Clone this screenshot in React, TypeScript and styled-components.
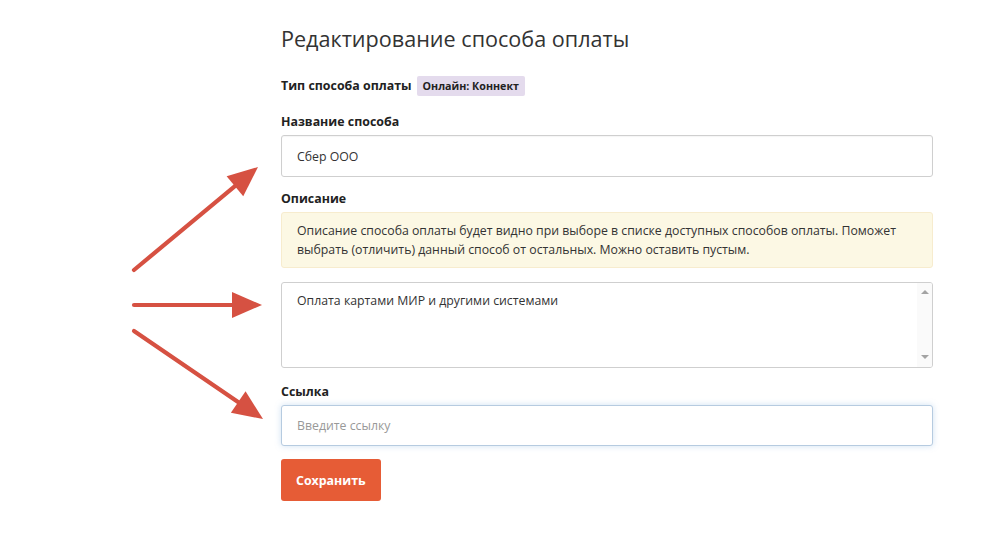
import React from "react";
import styled, { createGlobalStyle } from "styled-components";

const Global = createGlobalStyle`
  html, body { margin: 0; padding: 0; background: #fff; }
  body { font-family: "Open Sans", "Noto Sans", sans-serif; color: #333; }
  * { box-sizing: border-box; }
`;

const Page = styled.div`
  position: relative;
  width: 983px;
  min-height: 545px;
  padding: 26px 50px 0 281px;
`;

const Title = styled.h1`
  margin: 0 0 24px;
  font-size: 21.6px;
  font-weight: 400;
  line-height: 26px;
  color: #333;
`;

const TypeRow = styled.div`
  display: flex;
  align-items: center;
  gap: 5px;
  margin-bottom: 16px;
`;

const Label = styled.div`
  font-size: 12.4px;
  font-weight: 700;
  line-height: 18px;
  color: #222;
  padding-top: 1px;
  margin-bottom: 4px;
`;

const InlineLabel = styled(Label)`
  padding-top: 0;
  margin-bottom: 0;
`;

const Badge = styled.span`
  display: inline-block;
  background: #e4dbed;
  color: #222;
  font-size: 10.7px;
  font-weight: 700;
  line-height: 20px;
  padding: 0 6px;
  border-radius: 2px;
`;

const Group = styled.div`
  margin-bottom: 12px;
`;

const Input = styled.input<{ $focus?: boolean }>`
  display: block;
  width: 100%;
  height: ${(p) => (p.$focus ? 41 : 42)}px;
  padding: 0 15px;
  font-family: inherit;
  font-size: 12.3px;
  color: #333;
  background: #fff;
  border: 1px solid ${(p) => (p.$focus ? "#b6cbe0" : "#cfcfcf")};
  border-radius: 3px;
  outline: none;
  box-shadow: ${(p) =>
    p.$focus ? "0 0 6px rgba(120, 170, 220, 0.35)" : "inset 0 1px 1px rgba(0,0,0,0.04)"};
  &::placeholder { color: #999; }
`;

const Alert = styled.div`
  background: #fcf8e4;
  border: 1px solid #f7ecce;
  border-radius: 3px;
  padding: 8px 15px 8px;
  font-size: 12.3px;
  line-height: 19px;
  color: #333;
  margin-bottom: 14px;
`;

const AreaBox = styled.div`
  display: flex;
  height: 86px;
  border: 1px solid #cfcfcf;
  border-radius: 3px;
  overflow: hidden;
  margin-bottom: 14px;
  background: #fff;
`;

const TextArea = styled.textarea`
  flex: 1;
  display: block;
  height: 100%;
  padding: 8px 15px;
  font-family: inherit;
  font-size: 12.3px;
  line-height: 19px;
  color: #333;
  border: none;
  resize: none;
  overflow: hidden;
  outline: none;
  background: transparent;
`;

const ScrollTrack = styled.div`
  width: 15px;
  background: #fafafa;
  display: flex;
  flex-direction: column;
  align-items: center;
  justify-content: space-between;
  padding: 7px 0 8px;
`;

const ScrollArrow = styled.span<{ $dir: "up" | "down" }>`
  width: 0;
  height: 0;
  border-left: 4px solid transparent;
  border-right: 4px solid transparent;
  ${(p) =>
    p.$dir === "up"
      ? "border-bottom: 4px solid #a3a3a3;"
      : "border-top: 4px solid #a3a3a3;"}
`;

const Button = styled.button`
  margin-top: 1px;
  height: 42px;
  padding: 0 15px;
  background: #e65c36;
  color: #fff;
  border: none;
  border-radius: 3px;
  font-family: inherit;
  font-size: 12.4px;
  font-weight: 700;
  cursor: pointer;
`;

const Arrows = styled.svg`
  position: absolute;
  left: 0;
  top: 0;
  pointer-events: none;
`;

const RED = "#d65142";

const Arrow = ({ x1, y1, x2, y2 }: { x1: number; y1: number; x2: number; y2: number }) => {
  const ang = Math.atan2(y2 - y1, x2 - x1);
  const len = 30;
  const half = 13;
  const bx = x2 - len * Math.cos(ang);
  const by = y2 - len * Math.sin(ang);
  const px = -Math.sin(ang) * half;
  const py = Math.cos(ang) * half;
  const lx = x2 - (len - 2) * Math.cos(ang);
  const ly = y2 - (len - 2) * Math.sin(ang);
  return (
    <g>
      <line x1={x1} y1={y1} x2={lx} y2={ly} stroke={RED} strokeWidth={4.2} strokeLinecap="round" />
      <polygon points={`${x2},${y2} ${bx + px},${by + py} ${bx - px},${by - py}`} fill={RED} />
    </g>
  );
};

export default function App() {
  return (
    <>
      <Global />
      <Page>
        <Title>Редактирование способа оплаты</Title>
        <TypeRow>
          <InlineLabel>Тип способа оплаты</InlineLabel>
          <Badge>Онлайн: Коннект</Badge>
        </TypeRow>
        <Group>
          <Label>Название способа</Label>
          <Input defaultValue="Сбер ООО" />
        </Group>
        <Label>Описание</Label>
        <Alert>
          Описание способа оплаты будет видно при выборе в списке доступных способов оплаты. Поможет
          выбрать (отличить) данный способ от остальных. Можно оставить пустым.
        </Alert>
        <AreaBox>
          <TextArea defaultValue="Оплата картами МИР и другими системами" />
          <ScrollTrack>
            <ScrollArrow $dir="up" />
            <ScrollArrow $dir="down" />
          </ScrollTrack>
        </AreaBox>
        <Group>
          <Label>Ссылка</Label>
          <Input $focus placeholder="Введите ссылку" />
        </Group>
        <Button>Сохранить</Button>
        <Arrows width="300" height="450" viewBox="0 0 300 450">
          <Arrow x1={134} y1={270} x2={258} y2={167} />
          <Arrow x1={134} y1={305} x2={262} y2={305} />
          <Arrow x1={134} y1={331} x2={263} y2={419} />
        </Arrows>
      </Page>
    </>
  );
}
